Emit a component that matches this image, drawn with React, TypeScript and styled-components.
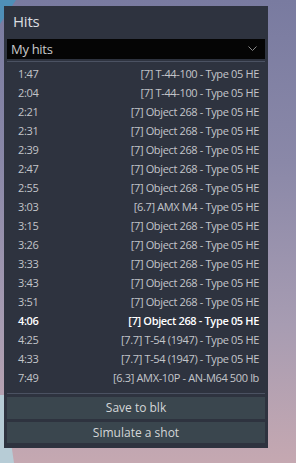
import React from 'react';
import styled, { createGlobalStyle } from 'styled-components';

// 페이지 기본
const Global = createGlobalStyle`
    html, body {
        margin: 0;
        padding: 0;
        width: 296px;
        height: 463px;
        overflow: hidden;
    }
    body {
        background: linear-gradient(180deg, #797ba0 0%, #8a88a8 35%, #a79cb2 70%, #c5a8b1 100%);
        font-family: 'Open Sans', 'Noto Sans', sans-serif;
    }
`;

// 배경 장식 (왼쪽 파란 조각)
const Backdrop = styled.div`
    position: relative;
    width: 296px;
    height: 463px;
    padding: 6px 0 0 4px;
    box-sizing: border-box;
`;

const BlueTop = styled.div`
    position: absolute;
    left: 0;
    top: 0;
    width: 16px;
    height: 24px;
    background: #4f8fb8;
    clip-path: polygon(0 0, 100% 0, 0 100%);
`;

const BlueBottom = styled.div`
    position: absolute;
    left: 0;
    top: 395px;
    width: 14px;
    height: 68px;
    background: #b7ccd6;
    clip-path: polygon(0 0, 30% 0, 100% 100%, 0 100%);
`;

// 패널
const Panel = styled.div`
    position: relative;
    width: 264px;
    height: 442px;
    background: #2e333f;
    display: flex;
    flex-direction: column;
    padding: 0 3px 2px;
    box-sizing: border-box;
`;

const Title = styled.div`
    height: 34px;
    line-height: 30px;
    padding-left: 6px;
    font-size: 15px;
    color: #dcdde0;
    letter-spacing: -0.2px;
`;

const Select = styled.div`
    height: 21px;
    background: #050505;
    display: flex;
    align-items: center;
    justify-content: space-between;
    padding: 0 8px 0 4px;
    font-size: 13px;
    color: #c9cacc;
    letter-spacing: -0.3px;
`;

const Sep = styled.div<{ $top: number; $bottom: number }>`
    height: 1px;
    background: #4b5262;
    margin-top: ${p => p.$top}px;
    margin-bottom: ${p => p.$bottom}px;
`;

const List = styled.div`
    display: flex;
    flex-direction: column;
    height: 323px;
`;

const Row = styled.div<{ $active?: boolean }>`
    height: 19px;
    display: flex;
    align-items: center;
    justify-content: space-between;
    padding: 0 6px 0 11px;
    font-size: 11px;
    letter-spacing: -0.35px;
    color: ${p => (p.$active ? '#ffffff' : '#c3c5ca')};
    font-weight: ${p => (p.$active ? 600 : 400)};
    white-space: nowrap;
`;

const Btn = styled.div`
    height: 22px;
    background: #3a464e;
    color: #d4d6d8;
    font-size: 12px;
    display: flex;
    align-items: center;
    justify-content: center;
    margin-bottom: 3px;
`;

const hits: [string, string][] = [
    ['1:47', '[7] T-44-100 - Type 05 HE'],
    ['2:04', '[7] T-44-100 - Type 05 HE'],
    ['2:21', '[7] Object 268 - Type 05 HE'],
    ['2:31', '[7] Object 268 - Type 05 HE'],
    ['2:39', '[7] Object 268 - Type 05 HE'],
    ['2:47', '[7] Object 268 - Type 05 HE'],
    ['2:55', '[7] Object 268 - Type 05 HE'],
    ['3:03', '[6.7] AMX M4 - Type 05 HE'],
    ['3:15', '[7] Object 268 - Type 05 HE'],
    ['3:26', '[7] Object 268 - Type 05 HE'],
    ['3:33', '[7] Object 268 - Type 05 HE'],
    ['3:43', '[7] Object 268 - Type 05 HE'],
    ['3:51', '[7] Object 268 - Type 05 HE'],
    ['4:06', '[7] Object 268 - Type 05 HE'],
    ['4:25', '[7.7] T-54 (1947) - Type 05 HE'],
    ['4:33', '[7.7] T-54 (1947) - Type 05 HE'],
    ['7:49', '[6.3] AMX-10P - AN-M64 500 lb'],
];

export default function App(): JSX.Element {
    return (
        <>
            <Global />
            <Backdrop>
                <BlueTop />
                <BlueBottom />
                <Panel>
                    <Title>Hits</Title>
                    <Select>
                        <span>My hits</span>
                        <svg width="9" height="6" viewBox="0 0 9 6">
                            <path d="M0.5 0.5 L4.5 4.5 L8.5 0.5" stroke="#8a8a8a" strokeWidth="1" fill="none" />
                        </svg>
                    </Select>
                    <Sep $top={2} $bottom={2} />
                    <List>
                        {hits.map(([t, name]) => (
                            <Row key={t} $active={t === '4:06'}>
                                <span>{t}</span>
                                <span>{name}</span>
                            </Row>
                        ))}
                    </List>
                    <Sep $top={6} $bottom={3} />
                    <Btn>Save to blk</Btn>
                    <Btn>Simulate a shot</Btn>
                </Panel>
            </Backdrop>
        </>
    );
}
